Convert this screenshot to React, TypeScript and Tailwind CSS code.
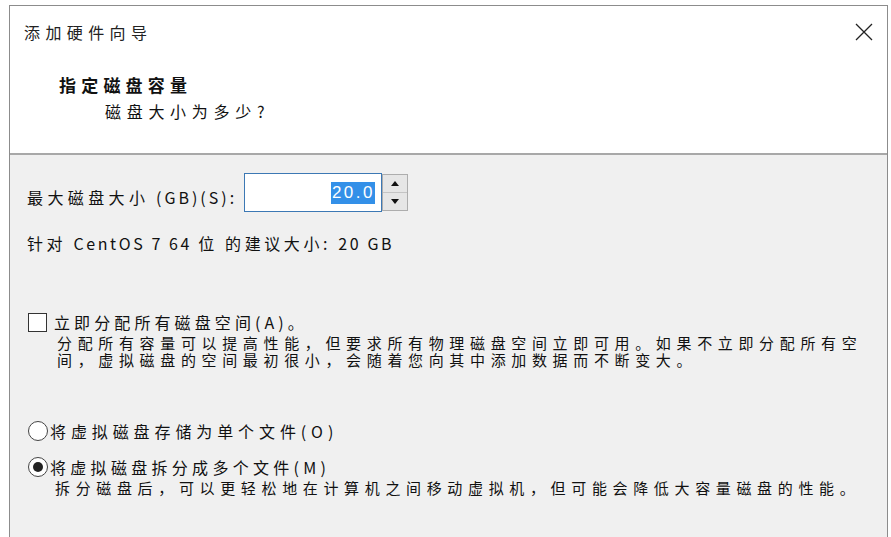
import React from 'react';

const font = "font-['Noto_Sans_CJK_SC','Noto_Sans',sans-serif]";
const paraFont = "font-['Liberation_Sans','Noto_Sans_CJK_SC',sans-serif]";

function CloseIcon() {
  return (
    <svg width="18" height="18" viewBox="0 0 18 18" className="shrink-0">
      <path d="M1 1 L17 17 M17 1 L1 17" stroke="#222" strokeWidth="1.3" fill="none" />
    </svg>
  );
}

function SpinBox() {
  return (
    <div className="flex">
      <div className="w-[138px] h-[39px] border border-[#3c78b4] bg-white flex items-center justify-end pr-[6px]">
        <span className="bg-[#3390e8] text-white text-[17px] leading-[22px] tracking-[2.5px] pl-[1px] font-['Liberation_Sans',sans-serif]">
          20.0
        </span>
      </div>
      <div className="w-[26px] h-[37px] mt-[1px] border border-[#adadad] bg-[#e6e6e6] flex flex-col">
        <div className="flex-1 flex items-center justify-center border-b border-[#c4c4c4]">
          <svg width="8" height="5" viewBox="0 0 8 5">
            <path d="M0 5 L4 0 L8 5 Z" fill="#111" />
          </svg>
        </div>
        <div className="flex-1 flex items-center justify-center">
          <svg width="8" height="5" viewBox="0 0 8 5">
            <path d="M0 0 L8 0 L4 5 Z" fill="#111" />
          </svg>
        </div>
      </div>
    </div>
  );
}

function Radio({ checked }: { checked?: boolean }) {
  return (
    <div className="w-[20px] h-[20px] rounded-full border-[1.5px] border-[#444] bg-white flex items-center justify-center shrink-0">
      {checked && <div className="w-[10px] h-[10px] rounded-full bg-[#222]" />}
    </div>
  );
}

export default function App() {
  return (
    <div className={`w-[891px] h-[537px] bg-white pt-[5px] pl-[9px] pr-[3px] overflow-hidden text-[#111] ${font}`}>
      <div className="h-full border-l border-t border-r border-[#8c8c8c] flex flex-col">
        <div className="h-[149px] shrink-0 bg-white border-b-2 border-[#a8a8a8] flex flex-col">
          <div className="flex items-center justify-between pl-[14px] pr-[14px] mt-[16px]">
            <span className="text-[16px] leading-[20px] tracking-[5.4px] text-[#222]">添加硬件向导</span>
            <CloseIcon />
          </div>
          <div className="pl-[49px] mt-[33px] text-[17px] leading-[20px] font-bold tracking-[5.2px]">
            指定磁盘容量
          </div>
          <div className="pl-[95px] mt-[6px] text-[16px] leading-[20px] tracking-[5.7px]">
            磁盘大小为多少?
          </div>
        </div>

        <div className="flex-1 bg-[#f0f0f0] flex flex-col pl-[17px]">
          <div className="flex items-start mt-[18px]">
            <div className="w-[217px] mt-[14px] text-[16px] leading-[20px] whitespace-nowrap">
              <span className="tracking-[4.4px]">最大磁盘大小</span>
              <span className="tracking-[3px]"> (GB)(S):</span>
            </div>
            <SpinBox />
          </div>

          <div className="mt-[21px] text-[16px] leading-[20px] whitespace-nowrap">
            <span className="tracking-[3.6px]">针对 </span>
            <span className="tracking-[2.6px]">CentOS 7 64 </span>
            <span className="tracking-[3.6px]">位 的建议大小: </span>
            <span className="tracking-[2.6px]">20 GB</span>
          </div>

          <div className="flex items-center mt-[59px] ml-[1px]">
            <div className="w-[19px] h-[19px] border-[1.5px] border-[#333] bg-white shrink-0" />
            <span className="ml-[7px] text-[16px] leading-[20px] tracking-[4.1px] whitespace-nowrap">
              立即分配所有磁盘空间(A)。
            </span>
          </div>

          <div className={`ml-[30px] mt-[3px] text-[15px] leading-[17px] tracking-[5.65px] whitespace-nowrap ${paraFont}`}>
            <div>分配所有容量可以提高性能，但要求所有物理磁盘空间立即可用。如果不立即分配所有空</div>
            <div>间，虚拟磁盘的空间最初很小，会随着您向其中添加数据而不断变大。</div>
          </div>

          <div className="flex items-center mt-[52px] ml-[1px]">
            <Radio />
            <span className="ml-[2px] text-[16px] leading-[20px] tracking-[4.9px] whitespace-nowrap">
              将虚拟磁盘存储为单个文件(O)
            </span>
          </div>

          <div className="flex items-center mt-[16px] ml-[1px]">
            <Radio checked />
            <span className="ml-[2px] text-[16px] leading-[20px] tracking-[4.3px] whitespace-nowrap">
              将虚拟磁盘拆分成多个文件(M)
            </span>
          </div>

          <div className={`ml-[28px] mt-[3px] text-[15px] leading-[17px] tracking-[5.65px] whitespace-nowrap ${paraFont}`}>
            拆分磁盘后，可以更轻松地在计算机之间移动虚拟机，但可能会降低大容量磁盘的性能。
          </div>
        </div>
      </div>
    </div>
  );
}
